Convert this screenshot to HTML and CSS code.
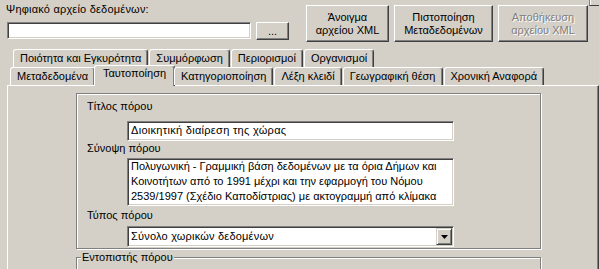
FILE: index.html
```html
<!DOCTYPE html>
<html lang="el">
<head>
  <meta charset="UTF-8" />
  <title>Μεταδεδομένα</title>
  <link rel="stylesheet" href="styles.css">
</head>
<body>
  <div class="top">
    <div class="file">
      <div class="file-label">Ψηφιακό αρχείο δεδομένων:</div>
      <div class="file-row">
        <div class="field file-input"></div>
        <button class="btn browse">...</button>
      </div>
    </div>
    <div class="actions">
      <button class="btn big open">Άνοιγμα<br>αρχείου XML</button>
      <button class="btn big validate">Πιστοποίηση<br>Μεταδεδομένων</button>
      <button class="btn big save" disabled>Αποθήκευση<br>αρχείου XML</button>
    </div>
    <div class="corner"></div>
  </div>

  <div class="tabs">
    <div class="tab-row back">
      <div class="tab">Ποιότητα και Εγκυρότητα</div>
      <div class="tab">Συμμόρφωση</div>
      <div class="tab">Περιορισμοί</div>
      <div class="tab">Οργανισμοί</div>
    </div>
    <div class="tab-row front">
      <div class="tab">Μεταδεδομένα</div>
      <div class="tab active">Ταυτοποίηση</div>
      <div class="tab">Κατηγοριοποίηση</div>
      <div class="tab">Λέξη κλειδί</div>
      <div class="tab">Γεωγραφική θέση</div>
      <div class="tab">Χρονική Αναφορά</div>
    </div>
  </div>

  <div class="panel">
    <div class="group ident">
      <div class="label">Τίτλος πόρου</div>
      <div class="field title-input">Διοικητική διαίρεση της χώρας</div>
      <div class="label">Σύνοψη πόρου</div>
      <div class="field summary">Πολυγωνική - Γραμμική βάση δεδομένων με τα όρια Δήμων και<br>Κοινοτήτων από το 1991 μέχρι και την εφαρμογή του Νόμου<br>2539/1997 (Σχέδιο Καποδίστριας) με ακτογραμμή από κλίμακα</div>
      <div class="label">Τύπος πόρου</div>
      <div class="field combo">
        <span>Σύνολο χωρικών δεδομένων</span>
        <div class="combo-btn">
          <svg width="7" height="4" viewBox="0 0 7 4"><polygon points="0,0 7,0 3.5,4" fill="#000"/></svg>
        </div>
      </div>
    </div>
    <fieldset class="group locator">
      <legend>Εντοπιστής πόρου</legend>
    </fieldset>
  </div>
</body>
</html>
```

FILE: styles.css
```css
* {
  box-sizing: border-box;
}
html, body {
  margin: 0;
  height: 269px;
  overflow: hidden;
}
body {
  background: #d4d0c8;
  font: 11px/13px "Liberation Sans", Arial, sans-serif;
  color: #000;
}

/* top bar */
.top {
  display: flex;
  align-items: flex-start;
  padding-left: 7px;
}
.file {
  width: 282px;
  padding-top: 3px;
}
.file-label {
  margin: 0 0 6px -1px;
  letter-spacing: 0.2px;
}
.file-row {
  display: flex;
}
.field {
  background: #fff;
  border: 1px solid;
  border-color: #808080 #fff #fff #808080;
  box-shadow: inset 1px 1px #404040, inset -1px -1px #d4d0c8;
}
.file-input {
  width: 244px;
  height: 17px;
}
.btn {
  font: inherit;
  color: #000;
  background: #d4d0c8;
  border: 1px solid;
  border-color: #fff #404040 #404040 #fff;
  box-shadow: inset -1px -1px #808080;
  padding: 0;
  margin: 0;
}
.btn:disabled {
  color: #808080;
  text-shadow: 1px 1px #fff;
}
.browse {
  width: 33px;
  height: 18px;
  margin-left: 5px;
}
.actions {
  display: flex;
  gap: 5px;
  margin: 5px 0 0 17px;
}
.big {
  height: 37px;
}
.open { width: 83px; }
.validate { width: 99px; }
.save { width: 90px; }
.corner {
  width: 10px;
  height: 6px;
  margin-left: 1px;
  border-left: 1px solid #808080;
  border-bottom: 1px solid #404040;
  box-shadow: inset 1px 0 #fff;
}

/* tabs */
.tabs {
  margin-top: 7px;
}
.tab-row {
  display: flex;
  height: 18px;
}
.tab-row.back {
  padding-left: 13px;
}
.tab-row.front {
  padding-left: 10px;
  position: relative;
  z-index: 1;
}
.tab {
  height: 18px;
  padding: 2px 6px 0 6px;
  margin-right: 1px;
  border: 1px solid;
  border-bottom: 0;
  border-color: #fff #404040 #fff #fff;
  box-shadow: inset -1px 0 #808080;
  border-radius: 3px 3px 0 0;
  white-space: nowrap;
  background: #d4d0c8;
}
.tab.active {
  height: 21px;
  margin: -2px -1px -1px -2px;
  padding: 1px 8px 0 8px;
}

/* panel */
.panel {
  margin-left: 7px;
  height: 184px;
  overflow: hidden;
  border: 1px solid;
  border-bottom: 0;
  border-color: #fff #404040 #fff #fff;
  box-shadow: inset -1px 0 #808080;
  padding: 7px 0 0 68px;
}
.group {
  width: 465px;
  border: 1px solid #808080;
  box-shadow: inset 1px 1px #fff, 1px 1px #fff;
}
.ident {
  height: 156px;
  padding: 6px 0 0 10px;
}
.label {
  height: 13px;
}
.ident .field {
  width: 327px;
  margin-left: 40px;
  padding-left: 3px;
  white-space: nowrap;
  overflow: hidden;
}
.title-input {
  height: 20px;
  margin-top: 8px;
  margin-bottom: 1px;
  padding-top: 2px;
  letter-spacing: 0.3px;
}
.summary {
  height: 48px;
  margin-top: 3px;
  margin-bottom: 3px;
  padding-top: 0;
  line-height: 15px;
}
.combo {
  display: flex;
  justify-content: space-between;
  height: 21px;
  margin-top: 4px;
  padding-top: 0;
  line-height: 19px;
  letter-spacing: 0.2px;
}
.combo-btn {
  width: 16px;
  height: 17px;
  margin: 1px;
  display: flex;
  align-items: center;
  justify-content: center;
  background: #d4d0c8;
  border: 1px solid;
  border-color: #d4d0c8 #404040 #404040 #d4d0c8;
  box-shadow: inset 1px 1px #fff, inset -1px -1px #808080;
}
.locator {
  margin: 2px 0 0;
  padding: 0 0 0 4px;
  min-width: 0;
  height: 30px;
}
.locator legend {
  padding: 0 1px;
  background: #d4d0c8;
}
```
